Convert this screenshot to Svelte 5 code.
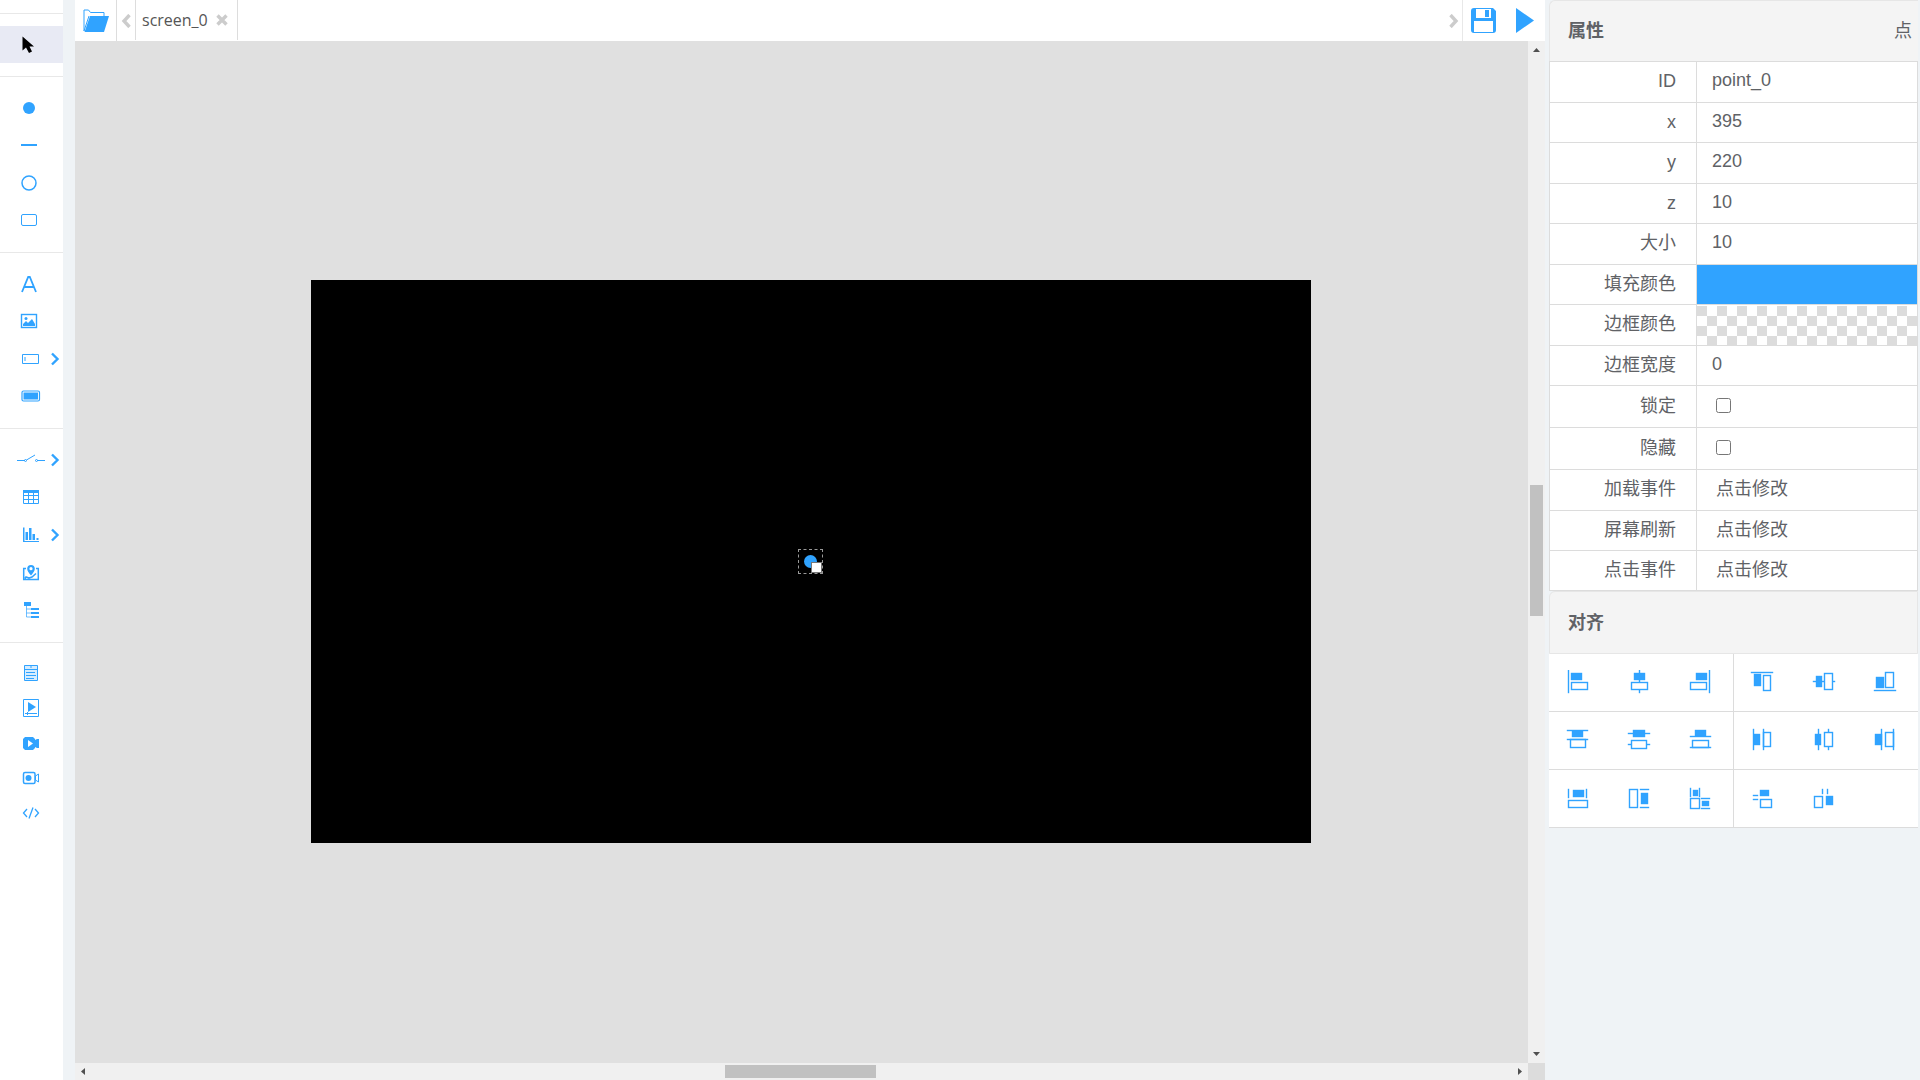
<script>
  const groups = [
    [{ id: 'select', label: 'Select', active: true }],
    [
      { id: 'dot', label: 'Point' },
      { id: 'line', label: 'Line' },
      { id: 'circle', label: 'Circle' },
      { id: 'rect', label: 'Rectangle' }
    ],
    [
      { id: 'text', label: 'Text' },
      { id: 'image', label: 'Image' },
      { id: 'input', label: 'Input', wide: true, more: true },
      { id: 'button', label: 'Button', wide: true }
    ],
    [
      { id: 'switch', label: 'Switch', wide: true, more: true },
      { id: 'table', label: 'Table', wide: true },
      { id: 'chart', label: 'Chart', wide: true, more: true },
      { id: 'map', label: 'Map', wide: true },
      { id: 'tree', label: 'Tree', wide: true }
    ],
    [
      { id: 'window', label: 'Window', wide: true },
      { id: 'player', label: 'Player', wide: true },
      { id: 'video', label: 'Video', wide: true },
      { id: 'camera', label: 'Camera', wide: true },
      { id: 'code', label: 'Code', wide: true }
    ]
  ];

  const props = [
    { key: 'id', label: 'ID', kind: 'text', value: 'point_0' },
    { key: 'x', label: 'x', kind: 'text', value: '395' },
    { key: 'y', label: 'y', kind: 'text', value: '220' },
    { key: 'z', label: 'z', kind: 'text', value: '10' },
    { key: 'size', label: '大小', kind: 'text', value: '10' },
    { key: 'fill', label: '填充颜色', kind: 'fill' },
    { key: 'stroke', label: '边框颜色', kind: 'clear' },
    { key: 'border', label: '边框宽度', kind: 'text', value: '0' },
    { key: 'lock', label: '锁定', kind: 'check' },
    { key: 'hide', label: '隐藏', kind: 'check' },
    { key: 'load', label: '加载事件', kind: 'event' },
    { key: 'refresh', label: '屏幕刷新', kind: 'event' },
    { key: 'click', label: '点击事件', kind: 'event' }
  ];

  // f: filled boxes, o: outlined boxes; each box is [left, top, right, bottom] on a 24px grid
  const aligns = [
    [
      { n: 'Align left', f: [[2, 0, 3, 23], [5, 3, 16, 10]], o: [[5, 12, 22, 20]] },
      { n: 'Align center', f: [[12, 0, 13, 23], [7, 3, 18, 10]], o: [[4, 12, 21, 20]], c: true },
      { n: 'Align right', f: [[21, 0, 22, 23], [8, 3, 19, 10]], o: [[2, 12, 19, 20]] }
    ],
    [
      { n: 'Align top', f: [[1, 2, 23, 3], [4, 4, 11, 16]], o: [[13, 5, 21, 21]] },
      { n: 'Align middle', f: [[1, 11, 23, 12], [4, 6, 10, 17]], o: [[12, 3, 21, 20]], c: true },
      { n: 'Align bottom', f: [[1, 20, 23, 21], [3, 7, 11, 18]], o: [[12, 2, 21, 18]] }
    ],
    [
      { n: 'Distribute top', f: [[1, 2, 22, 3], [6, 3, 17, 9], [1, 11, 22, 12]], o: [[4, 11, 20, 20]] },
      { n: 'Distribute vertical centers', f: [[6, 2, 18, 9], [1, 5, 23, 6], [1, 16, 23, 17]], o: [[4, 12, 20, 21]], c: true },
      { n: 'Distribute bottom', f: [[7, 2, 18, 8], [2, 8, 23, 9], [2, 19, 23, 20]], o: [[4, 12, 21, 20]] }
    ],
    [
      { n: 'Distribute left', f: [[3, 1, 4, 22], [4, 6, 10, 17], [13, 1, 14, 22]], o: [[13, 4, 21, 19]] },
      { n: 'Distribute horizontal centers', f: [[3, 6, 9, 17], [6, 1, 7, 22], [16, 1, 17, 22]], o: [[12, 4, 21, 19]], c: true },
      { n: 'Distribute right', f: [[2, 6, 9, 17], [8, 1, 9, 22], [20, 1, 21, 22]], o: [[12, 4, 21, 19]] }
    ],
    [
      { n: 'Same width', f: [[2, 3, 3, 12], [7, 4, 18, 11], [20, 3, 21, 12]], o: [[2, 14, 22, 22]] },
      { n: 'Same height', f: [[13, 3, 22, 4], [14, 7, 21, 18], [13, 21, 22, 22]], o: [[2, 3, 11, 22]] },
      { n: 'Same size', f: [[2, 2, 3, 11], [5, 4, 10, 10], [11, 2, 12, 11], [13, 12, 22, 13], [14, 15, 21, 20], [13, 22, 22, 23]], o: [[2, 12, 12, 23]] }
    ],
    [
      { n: 'Vertical spacing', f: [[10, 4, 19, 10], [3, 9, 8, 10], [3, 13, 8, 14]], o: [[10, 13, 22, 22]] },
      { n: 'Horizontal spacing', f: [[10, 3, 11, 8], [15, 3, 16, 8], [14, 10, 21, 19]], o: [[2, 10, 11, 22]] }
    ]
  ];
</script>

<div class="app">
  <nav class="tools">
    {#each groups as group, g}
      <div class="group g{g}">
        {#each group as t}
          <button class="tool" class:active={t.active} class:wide={t.wide} aria-label={t.label}>
            <svg class="glyph" viewBox="0 0 30 24" aria-hidden="true">
              {#if t.id === 'select'}
                <path fill="#000" d="M8.500 3.500v14l3.500-3 3 5.500 3-1.500-2.500-5H20z" />
              {:else if t.id === 'dot'}
                <circle cx="15" cy="12" r="6" />
              {:else if t.id === 'line'}
                <path d="M7 11h16v2H7z" />
              {:else if t.id === 'circle'}
                <circle class="s" cx="15" cy="12" r="7" stroke-width="1.500" />
              {:else if t.id === 'rect'}
                <rect class="s" x="7.500" y="6.500" width="15" height="11" rx="1.500" />
              {:else if t.id === 'text'}
                <path class="s" stroke-width="1.800" d="M8 20 14.200 5h1.600L22 20M10.200 15h9.600" />
              {:else if t.id === 'image'}
                <rect class="s" x="7.500" y="5.500" width="15" height="13" stroke-width="1.400" />
                <circle cx="12" cy="9.500" r="1.500" />
                <path d="M9 17v-2l3-3 2 2 4-4 3 5v2z" />
              {:else if t.id === 'input'}
                <path class="s" d="M6.500 7.500h16v9h-16zM9 10v4" />
              {:else if t.id === 'button'}
                <rect class="s" x="6" y="7" width="17.500" height="10" rx="1.500" stroke-width="1.200" />
                <path d="M7.500 8.500h14.500v7H7.500z" />
              {:else if t.id === 'switch'}
                <path class="s" d="M1 12.500h8M10.500 12 19 7M21 12.500h8" />
                <circle class="s" cx="9.500" cy="12.500" r="1" /><circle class="s" cx="20.500" cy="12.500" r="1" />
              {:else if t.id === 'table'}
                <path class="s" d="M7.500 5.500h15v13h-15zM7 10.500h16M7 14.500h16M12.500 7v12M17.500 7v12" /><path d="M7 5h16v3H7z" />
              {:else if t.id === 'chart'}
                <path d="M7 4.500h1.500V19H7zM9.500 9H12v8H9.500zM13 5h2.500v12H13zM16.500 11H19v6h-2.500zM20.500 15h2v2h-2zM7 18h16v1H7z" />
              {:else if t.id === 'map'}
                <path class="s" stroke-width="1.500" d="M10 7.500H7.700v11h14.600v-11H20M9 17.500l1-1.500 3 1 3-1 4-3.500" />
                <path fill-rule="evenodd" d="M15 14.500c-2.500-3-3.800-4.500-3.800-6.700a3.800 3.800 0 0 1 7.600 0c0 2.200-1.300 3.700-3.800 6.700zM15 9.300a1.600 1.600 0 1 0 0-3.200 1.600 1.600 0 0 0 0 3.200z" />
              {:else if t.id === 'tree'}
                <path d="M8 4h7v4H8zM15 10h8v2h-8zM15 14h8v2h-8zM15 18h8v2h-8z" /><path class="s" opacity=".7" d="M10.500 8v11H15M10.500 11H15M10.500 15H15" />
              {:else if t.id === 'window'}
                <path class="s" d="M8.500 4.500h13v15h-13zM8 8.500h14M15 4v3M10 11.500h9M10 14.500h10M10 17.500h8" /><path opacity=".2" d="M8 4h14v15H8z" />
              {:else if t.id === 'player'}
                <path class="s" d="M7.500 3.500h15v17h-15zM9 17.500h12M11.500 16v3" /><path d="M12 6v10l8-5z" />
              {:else if t.id === 'video'}
                <path fill-rule="evenodd" d="M9 6h8l2 2v1l2-1h2v9h-2l-2-1v1l-2 2H9l-2-2V8zM12 9v7l5-3.500z" />
              {:else if t.id === 'camera'}
                <rect class="s" x="7.500" y="6.500" width="11.500" height="11" rx="1.500" stroke-width="1.500" /><circle cx="12.500" cy="12" r="3" /><path class="s" d="M19.500 10l3-2v8l-3-2z" />
              {:else}
                <path class="s" stroke-width="1.300" d="M11 8l-3.500 4 3.500 4M19 8l3.500 4-3.500 4M17 6.500l-4 11" />
              {/if}
            </svg>
            {#if t.more}
              <svg class="more" viewBox="0 0 10 14" aria-hidden="true"><path class="s" stroke-width="2.400" d="M2 1.500 7.500 7 2 12.500" /></svg>
            {/if}
          </button>
        {/each}
      </div>
    {/each}
  </nav>

  <main class="editor">
    <header class="bar">
      <button class="open" aria-label="Open">
        <svg width="28" height="26" viewBox="0 0 28 26"><path class="s" d="M2 23V2h4.500l2 2.500H22V8M2 23 7 8" /><path d="M8 8h19l-5 16H2.500z" /></svg>
      </button>
      <button class="scroll" aria-label="Previous tabs">
        <svg width="10" height="14" viewBox="0 0 10 14"><path class="grey" d="M8.500 1 3 7l5.500 6" /></svg>
      </button>
      <div class="tab">
        <span>screen_0</span>
        <button aria-label="Close tab"><svg width="12" height="12" viewBox="0 0 12 12"><path class="grey" d="M1.500 1.500l9 9M10.500 1.500l-9 9" /></svg></button>
      </div>
      <button class="scroll next" aria-label="Next tabs">
        <svg width="10" height="14" viewBox="0 0 10 14"><path class="grey" d="M1.500 1 7 7l-5.500 6" /></svg>
      </button>
      <div class="actions">
        <button aria-label="Save">
          <svg width="25" height="25" viewBox="0 0 25 25"><path fill-rule="evenodd" d="M3 0h19l3 3v19a3 3 0 0 1-3 3H3a3 3 0 0 1-3-3V3a3 3 0 0 1 3-3zM5 1v9h15V1zM3 13v11h19V13z" /><path d="M14 2h4v7h-4z" /></svg>
        </button>
        <button aria-label="Run"><svg width="18" height="25" viewBox="0 0 18 25"><path d="M0 0v25l18-12.500z" /></svg></button>
      </div>
    </header>

    <div class="work">
      <div class="canvas">
        <div class="stage">
          <div class="point"><i></i><b></b></div>
        </div>
      </div>
      <div class="vbar">
        <svg width="7" height="4" viewBox="0 0 7 4"><path fill="#505050" d="M0 4 3.500 0 7 4z" /></svg>
        <span class="thumb"></span>
        <svg width="7" height="4" viewBox="0 0 7 4"><path fill="#505050" d="M0 0h7L3.500 4z" /></svg>
      </div>
      <div class="hbar">
        <svg width="4" height="7" viewBox="0 0 4 7"><path fill="#505050" d="M4 0v7L0 3.500z" /></svg>
        <span class="thumb"></span>
        <svg width="4" height="7" viewBox="0 0 4 7"><path fill="#505050" d="M0 0v7l4-3.500z" /></svg>
      </div>
      <div class="corner"></div>
    </div>
  </main>

  <aside class="panel">
    <header class="head"><h2>属性</h2><span>点</span></header>
    <table>
      <tbody>
        {#each props as p}
          <tr class={p.kind}>
            <th scope="row"><label for={p.key}>{p.label}</label></th>
            <td>
              {#if p.kind === 'text'}
                <input id={p.key} type="text" value={p.value} />
              {:else if p.kind === 'check'}
                <input id={p.key} type="checkbox" />
              {:else if p.kind === 'event'}
                <button id={p.key}>点击修改</button>
              {:else}
                <button id={p.key} class="swatch" aria-label={p.label}></button>
              {/if}
            </td>
          </tr>
        {/each}
      </tbody>
    </table>
    <header class="head second"><h2>对齐</h2></header>
    <div class="aligns">
      {#each aligns as set}
        <div class="set">
          {#each set as a}
            <button aria-label={a.n}>
              <svg width="24" height="24" viewBox="0 0 24 24">
                {#each a.f as [l, t, r, b]}
                  <rect class="solid" x={l} y={t} width={r - l} height={b - t} />
                {/each}
                {#each a.o as [l, t, r, b]}
                  <rect class="s outline" class:mask={a.c} x={l + 0.5} y={t + 0.5} width={r - l - 1} height={b - t - 1} />
                {/each}
              </svg>
            </button>
          {/each}
        </div>
      {/each}
    </div>
  </aside>
</div>

<style>
  :global(body) { margin: 0; background: #eff3f6; }
  .app {
    display: flex;
    height: 100vh;
    overflow: hidden;
    color: #606266;
    font-family: "Liberation Sans", "Noto Sans CJK SC", sans-serif;
    font-size: 18px;
  }
  button {
    margin: 0;
    padding: 0;
    border: 0;
    background: none;
    color: inherit;
    font: inherit;
    cursor: pointer;
  }
  svg { display: block; fill: #30a3ff; flex: none; }
  .s { fill: none; stroke: #30a3ff; }
  .solid { stroke: #30a3ff; stroke-width: 0.4; }
  .outline { stroke-width: 1.4; }
  .mask { fill: #fff; }
  .grey { fill: none; stroke: #ccc; stroke-width: 3.4; }

  .tools {
    flex: none;
    box-sizing: border-box;
    width: 63px;
    padding-top: 13px;
    background: #fff;
  }
  .group {
    display: grid;
    grid-auto-rows: 1fr;
    box-sizing: border-box;
    padding: 12px 0 13px;
    border-top: 1px solid #e8e8e8;
  }
  .g0 { height: 63px; }
  .g1, .g2 { height: 176px; }
  .g3 { height: 214px; }
  .g4 { height: 201px; }
  .tool { display: flex; align-items: center; padding-left: 14px; }
  .wide { padding-left: 16px; }
  .active { background: #e8eaf4; }
  .glyph { width: 30px; height: 24px; }
  .more { width: 10px; height: 14px; margin-left: 4px; }

  .editor {
    flex: 1;
    min-width: 0;
    display: flex;
    flex-direction: column;
    margin: 0 4px 0 12px;
  }
  .bar { flex: none; display: flex; height: 41px; background: #fff; }
  .open { padding: 0 6px 0 7px; border-right: 1px solid #ddd; }
  .scroll { padding: 0 4px; }
  .tab {
    display: flex;
    align-items: center;
    gap: 8px;
    height: 40px;
    padding: 0 9px 0 6px;
    border: solid #ddd;
    border-width: 0 1px;
    color: #555;
    font-family: "Open Sans", sans-serif;
    font-size: 16px;
  }
  .next { margin-left: auto; padding-right: 3px; }
  .actions {
    display: flex;
    align-items: center;
    gap: 20px;
    padding: 0 11px 0 8px;
    border-left: 1px solid #e8e8e8;
  }
  .work { flex: 1; min-height: 0; display: grid; grid-template: 1fr 17px / 1fr 17px; }
  .canvas {
    display: grid;
    place-items: center;
    overflow: hidden;
    padding: 19px 0 0 19px;
    background: #e0e0e0;
  }
  .stage {
    display: grid;
    place-items: center;
    box-sizing: border-box;
    width: 1000px;
    height: 563px;
    padding-right: 1px;
    background: #000;
  }
  .point {
    position: relative;
    display: grid;
    place-items: center;
    box-sizing: border-box;
    width: 25px;
    height: 25px;
    border: 1px dashed #999;
  }
  .point i { width: 13px; height: 13px; border-radius: 50%; background: #30a3ff; }
  .point b {
    position: absolute;
    right: 0;
    bottom: 0;
    box-sizing: border-box;
    width: 11px;
    height: 11px;
    border: 1px solid #777;
    background: #fff;
  }
  .vbar, .hbar {
    display: flex;
    align-items: center;
    justify-content: space-between;
    background: #f0f0f0;
  }
  .vbar { flex-direction: column; padding: 7px 0; }
  .hbar { padding: 0 6px; }
  .thumb { background: #c1c1c1; }
  .vbar .thumb { width: 13px; height: 131px; margin-bottom: 4px; }
  .hbar .thumb { width: 151px; height: 13px; margin-right: 2px; }
  .corner { background: #dcdcdc; }

  .panel { flex: none; width: 369px; margin-right: 2px; }
  .head {
    display: flex;
    align-items: center;
    justify-content: space-between;
    box-sizing: border-box;
    height: 61px;
    padding: 0 6px 4px 18px;
    border: solid #e6e6e6;
    border-width: 1px 0 0 1px;
    border-radius: 6px 0 0 0;
    background: #f4f4f4;
  }
  .second { height: 63px; border-width: 1px; }
  h2 { margin: 0; font-size: 18px; font-weight: 700; }
  table { width: 100%; border-collapse: collapse; table-layout: fixed; background: #fff; }
  tr { height: 41px; }
  tr:nth-child(even), tr:last-child { height: 40px; }
  tr.check { height: 42px; }
  th, td { padding: 0; border: 1px solid #dcdcdc; line-height: 24px; }
  th {
    box-sizing: border-box;
    width: 147px;
    padding: 0 20px 2px 0;
    font-weight: 400;
    text-align: right;
  }
  .text td { padding-bottom: 4px; }
  .check td, .event td { padding-bottom: 2px; }
  input[type="text"] {
    display: block;
    box-sizing: border-box;
    width: 100%;
    height: 24px;
    margin: 0;
    padding: 0 15px;
    border: 0;
    outline: 0;
    background: none;
    color: inherit;
    font: inherit;
  }
  input[type="checkbox"] { display: block; width: 15px; height: 15px; margin: 0 0 0 19px; }
  .event button { display: block; padding-left: 19px; line-height: 24px; }
  .swatch { display: block; width: 100%; height: 39px; background: #30a3ff; }
  .clear .swatch { background: repeating-conic-gradient(#fff 0 25%, #dcdcdc 0 50%) 0 0 / 20px 20px; }

  .aligns { display: grid; grid-template-columns: 1fr 1fr; background: #fff; }
  .set {
    display: grid;
    grid-template-columns: repeat(3, 1fr);
    box-sizing: border-box;
    height: 58px;
    border-bottom: 1px solid #dcdcdc;
  }
  .set:nth-child(odd) { border-right: 1px solid #dcdcdc; }
  .set button { display: grid; place-items: center; padding: 0 4px 1px 0; }
</style>
